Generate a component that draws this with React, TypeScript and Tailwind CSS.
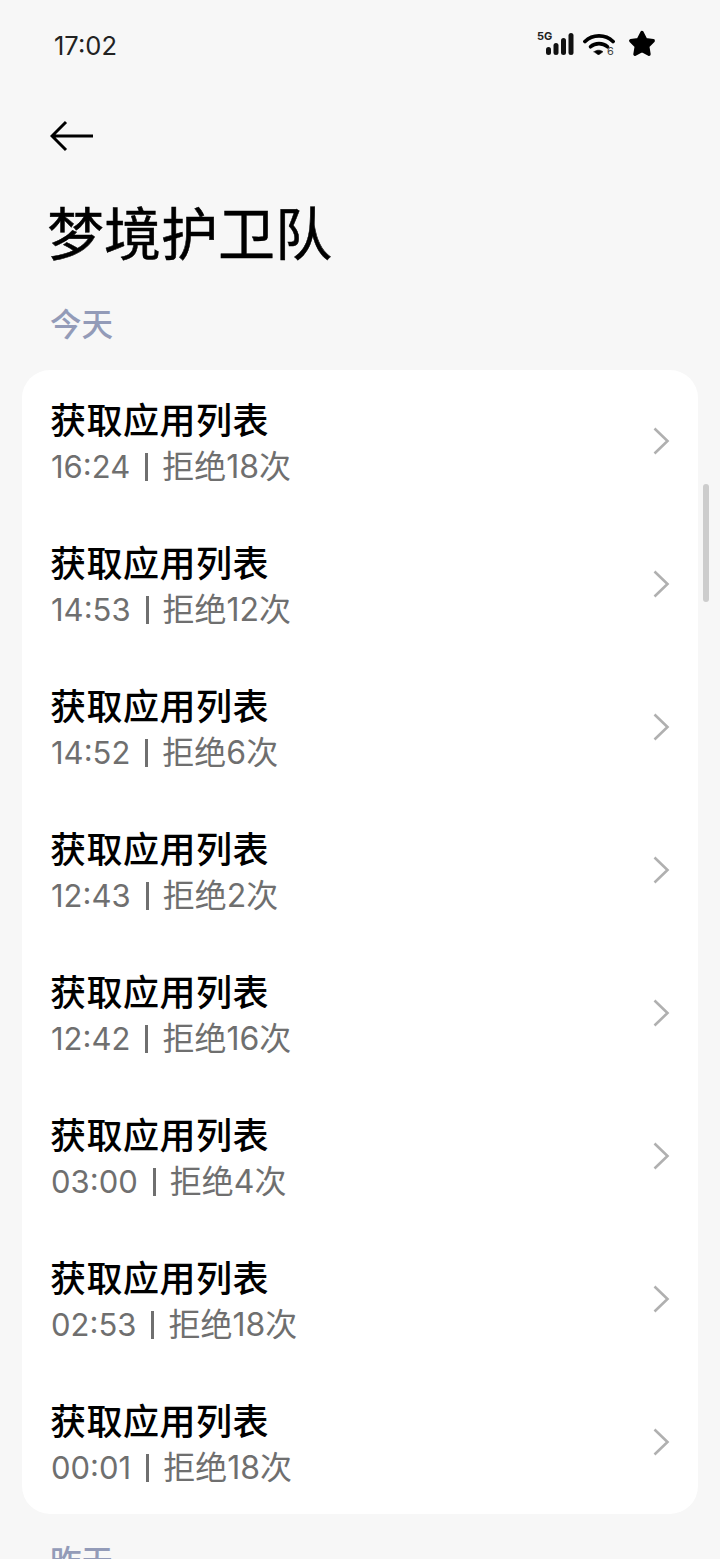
import React from "react";

const font = { fontFamily: '"Noto Sans CJK SC", sans-serif' };
const rows: [string, string][] = [
  ["16:24", "拒绝18次"],
  ["14:53", "拒绝12次"],
  ["14:52", "拒绝6次"],
  ["12:43", "拒绝2次"],
  ["12:42", "拒绝16次"],
  ["03:00", "拒绝4次"],
  ["02:53", "拒绝18次"],
  ["00:01", "拒绝18次"],
];

function StatusIcons() {
  return (
    <div className="flex items-start">
      <div className="relative w-[40px] h-[28px]">
        <span className="absolute left-[2px] top-[1px] text-[11px] leading-[12px] font-bold text-[#222] font-['Inter',sans-serif]">5G</span>
        <svg className="absolute left-[11px] top-[4px]" width="28" height="24" viewBox="0 0 28 24">
          <rect x="0" y="14" width="5" height="8" rx="2.5" fill="#111" />
          <rect x="7.5" y="10" width="5" height="12" rx="2.5" fill="#111" />
          <rect x="15" y="5" width="5" height="17" rx="2.5" fill="#111" />
          <rect x="22.5" y="0" width="5" height="22" rx="2.5" fill="#111" />
        </svg>
      </div>
      <div className="relative w-[34px] h-[28px] ml-[8px]">
        <svg className="absolute left-0 top-[4px]" width="32" height="22" viewBox="0 0 32 22" fill="none" stroke="#000" strokeLinecap="round">
          <path d="M2 8.5C9.5 1 22.5 1 30 8.5" strokeWidth="3.8" />
          <path d="M7.5 13.8C12 9.5 20 9.5 24.5 13.8" strokeWidth="3.6" />
          <path d="M11 18.8L15.5 22L20 18.8C17.8 16.6 13.2 16.6 11 18.8Z" fill="#000" strokeWidth="0.5" />
        </svg>
        <span className="absolute left-[24px] top-[16px] text-[11px] leading-[12px] text-[#444] font-['Inter',sans-serif]">6</span>
      </div>
      <svg className="ml-[11px] mt-[1px]" width="28" height="27" viewBox="0 0 28 27">
        <path
          d="M14 2.5L17.6 9.6L25.2 10.8L19.7 16.4L21 24.2L14 20.6L7 24.2L8.3 16.4L2.8 10.8L10.4 9.6Z"
          fill="#000"
          stroke="#000"
          strokeWidth="3.4"
          strokeLinejoin="round"
        />
      </svg>
    </div>
  );
}

function Row({ time, text }: { time: string; text: string }) {
  return (
    <div className="h-[143px] flex items-center justify-between pl-[29px] pr-[28px]">
      <div className="flex flex-col pt-[3px]">
        <div className="text-[36px] leading-[45px] font-medium text-black tracking-[0.5px] ml-[-1px] mt-[-1px]">获取应用列表</div>
        <div className="text-[31px] leading-[45px] mt-[3px] text-[#6f6f6f] whitespace-nowrap font-['Inter','Noto_Sans_CJK_SC',sans-serif]">
          {time}
          <span className="inline-block align-[-3px] ml-[15px] mr-[14px] w-[3px] h-[28px] bg-[#6f6f6f]" />
          <span className="text-[32px]">{text}</span>
        </div>
      </div>
      <svg className="mb-[1px]" width="18" height="28" viewBox="0 0 18 28" fill="none" stroke="#b0b0b0" strokeWidth="2.6">
        <path d="M2.5 1.5L15.5 14L2.5 26.5" />
      </svg>
    </div>
  );
}

export default function App() {
  return (
    <div className="relative w-[720px] h-[1559px] overflow-hidden bg-[#f7f7f7]" style={font}>
      <div className="flex items-start justify-between h-[107px] pt-[29px] pl-[54px] pr-[64px]">
        <span className="mt-[1px] text-[25.5px] leading-[32px] text-[#222] font-['Inter',sans-serif]">17:02</span>
        <StatusIcons />
      </div>
      <div className="pl-[50px] h-[54px] flex items-center pt-[3px]">
        <svg width="44" height="32" viewBox="0 0 44 32" fill="none" stroke="#000" strokeWidth="3">
          <path d="M43 16H3M16 2L2 16L16 30" />
        </svg>
      </div>
      <h1 className="pl-[47px] mt-[31px] text-[57px] leading-[76px] font-normal text-black [-webkit-text-stroke:0.5px_black]">梦境护卫队</h1>
      <div className="pl-[50px] mt-[31px] text-[31.5px] leading-[46px] font-medium text-[#939bb8]">今天</div>
      <div className="mx-[22px] mt-[25px] bg-white rounded-[28px]">
        {rows.map(([t, x], i) => (
          <Row key={i} time={t} text={x} />
        ))}
      </div>
      <div className="pl-[50px] mt-[22px] text-[31.5px] leading-[46px] font-medium text-[#939bb8]">昨天</div>
      <div className="absolute left-[703px] top-[484px] w-[6px] h-[118px] rounded-full bg-[#cdcdcd]" />
    </div>
  );
}
